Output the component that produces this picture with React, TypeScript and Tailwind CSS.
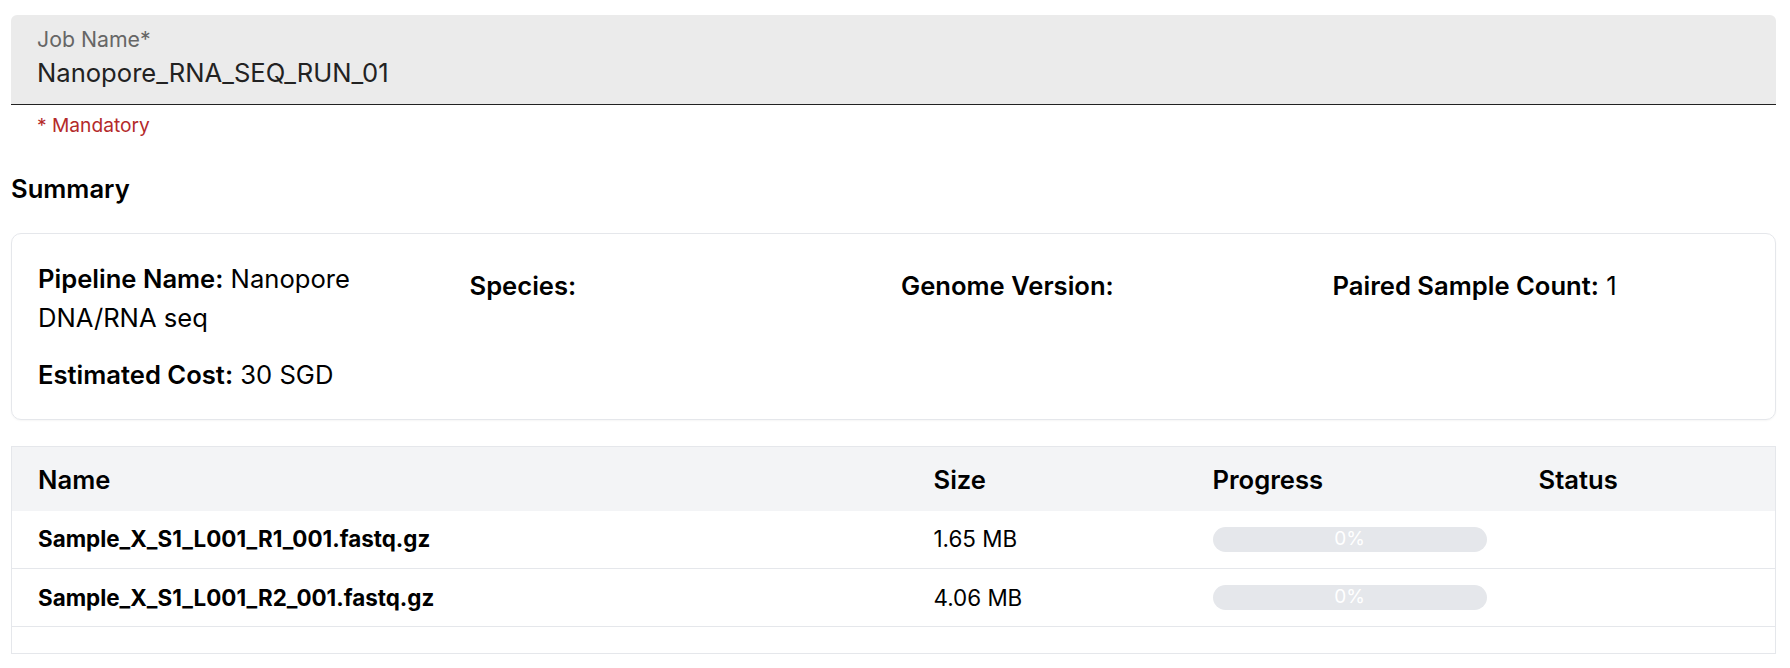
const files = [
  { name: 'Sample_X_S1_L001_R1_001.fastq.gz', size: '1.65 MB', progress: 0 },
  { name: 'Sample_X_S1_L001_R2_001.fastq.gz', size: '4.06 MB', progress: 0 },
]

function Field({ label, value }: { label: string; value: string }) {
  return (
    <div>
      <div className="flex h-[90px] flex-col rounded-t-[6px] border-b border-[#222] bg-[#ebebeb] px-[26px] pt-[11px]">
        <span className="text-[21.3px] leading-[26px] text-[#666]">{label}</span>
        <span className="mt-[5px] text-[25.6px] leading-[32px] text-[#222]">{value}</span>
      </div>
      <p className="px-[26px] pt-[7px] text-[19.2px] leading-[26px] text-[#b42a2a]">* Mandatory</p>
    </div>
  )
}

function Item({ label, value }: { label: string; value?: string }) {
  return (
    <p className="text-[25.6px] leading-[39px] text-black">
      <span className="font-semibold">{label}</span>
      {value ? ` ${value}` : ''}
    </p>
  )
}

function ProgressBar({ value }: { value: number }) {
  return (
    <div className="relative h-[25px] w-[274px] overflow-hidden rounded-full bg-[#e5e7eb]">
      <div className="h-full bg-[#3b82f6]" style={{ width: `${value}%` }} />
      <span className="absolute inset-0 flex items-center justify-center text-[19px] text-white">
        {value}%
      </span>
    </div>
  )
}

export default function App() {
  return (
    <div className="min-h-[668px] bg-white pl-[11px] pr-[14px] pt-[15px] font-['Inter',sans-serif]">
      <Field label="Job Name*" value="Nanopore_RNA_SEQ_RUN_01" />

      <h2 className="mt-[35px] text-[25.6px] font-semibold leading-[32px] text-black">Summary</h2>

      <div className="mt-[28px] grid h-[187px] grid-cols-4 rounded-[10px] border border-[#e5e7eb] pl-[26px] pr-[11px] pt-[25px] shadow-[0_1px_2px_rgba(0,0,0,0.04)]">
        <div className="flex flex-col gap-[18px] pr-[60px]">
          <Item label="Pipeline Name:" value="Nanopore DNA/RNA seq" />
          <Item label="Estimated Cost:" value="30 SGD" />
        </div>
        <div className="pt-[7px]">
          <Item label="Species:" />
        </div>
        <div className="pt-[7px]">
          <Item label="Genome Version:" />
        </div>
        <div className="pt-[7px]">
          <Item label="Paired Sample Count:" value="1" />
        </div>
      </div>

      <table className="mt-[26px] w-full border border-[#e5e7eb] text-left text-black">
        <thead className="bg-[#f3f4f6]">
          <tr className="h-[64px] text-[25.6px]">
            <th className="w-[922px] pl-[26px] pt-[3px] font-semibold">Name</th>
            <th className="w-[279px] pt-[3px] font-semibold">Size</th>
            <th className="w-[326px] pt-[3px] font-semibold">Progress</th>
            <th className="pt-[3px] font-semibold">Status</th>
          </tr>
        </thead>
        <tbody className="text-[22.4px]">
          {files.map((f) => (
            <tr key={f.name} className="h-[58px] border-b border-[#e5e7eb]">
              <td className="pl-[26px] font-bold">{f.name}</td>
              <td>{f.size}</td>
              <td>
                <ProgressBar value={f.progress} />
              </td>
              <td />
            </tr>
          ))}
          <tr className="h-[27px]">
            <td colSpan={4} />
          </tr>
        </tbody>
      </table>
    </div>
  )
}
